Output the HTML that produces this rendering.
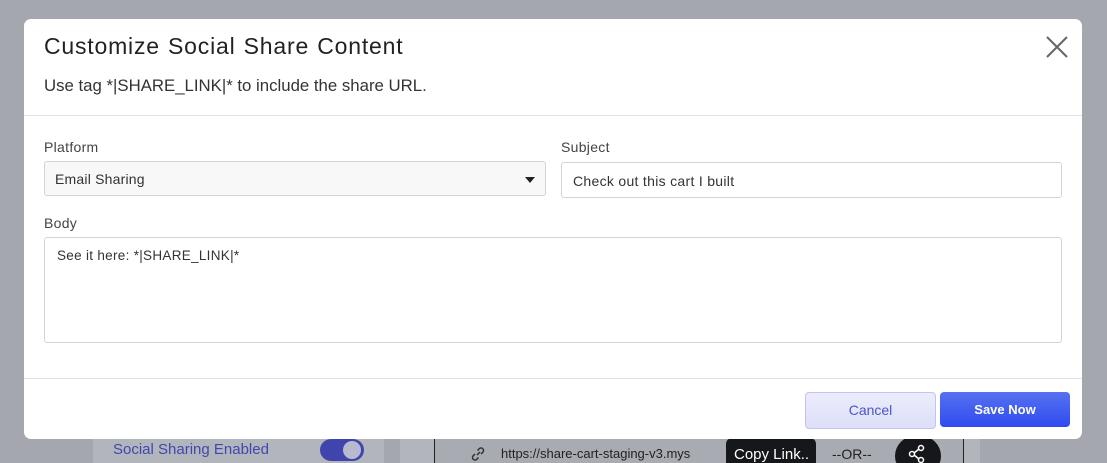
<!DOCTYPE html>
<html><head><style>
html,body{margin:0;width:1107px;height:463px;overflow:hidden}
body{background:#a4a7ae;position:relative;font-family:"Liberation Sans",sans-serif}
.p{position:absolute}
.modal{left:24px;top:19px;width:1058px;height:420px;background:#fff;border-radius:7px}
.inp{position:absolute;border:1px solid #d4d4d8;border-radius:3px;background:#fff;font-size:14px;color:#333;box-sizing:border-box}
.lbl{position:absolute;font-size:14px;color:#444}
</style></head><body>
<div class="p" style="left:93px;top:430px;width:291px;height:40px;background:#b3b5bc"></div>
<div class="p" style="left:400px;top:430px;width:580px;height:40px;background:#b3b5bc"></div>
<div class="p" style="left:434px;top:430px;width:528px;height:40px;background:#a9abb2;border-left:1px solid #222;border-right:1px solid #222"></div>
<div class="p" style="left:113px;top:441px;font-size:15px;color:#4048b0">Social Sharing Enabled</div>
<div class="p" style="left:320px;top:439px;width:44px;height:22px;border-radius:11px;background:#3f45ad"></div>
<div class="p" style="left:343px;top:441px;width:18px;height:18px;border-radius:9px;background:#b8bad0"></div>
<svg class="p" style="left:470px;top:446px" width="16" height="16"><path d="M7 9l3-3M5 8l-2 2a2.5 2.5 0 0 0 3.5 3.5l2-2M11 8l2-2a2.5 2.5 0 0 0-3.5-3.5l-2 2" stroke="#333" stroke-width="1.5" fill="none"/></svg>
<div class="p" style="left:501px;top:446px;font-size:13px;color:#222">https://share-cart-staging-v3.mys</div>
<div class="p" style="left:726px;top:438px;width:90px;height:30px;background:#16171a;border-radius:6px;color:#fff;font-size:15px;padding:8px 0 0 8px;box-sizing:border-box">Copy Link..</div>
<div class="p" style="left:832px;top:446px;font-size:14px;color:#222">--OR--</div>
<div class="p" style="left:895px;top:436px;width:46px;height:40px;border-radius:23px;background:#16171a"></div>
<svg class="p" style="left:907px;top:444px" width="20" height="20"><circle cx="14" cy="4" r="2.5" stroke="#fff" fill="none" stroke-width="1.5"/><circle cx="5" cy="10" r="2.5" stroke="#fff" fill="none" stroke-width="1.5"/><circle cx="14" cy="16" r="2.5" stroke="#fff" fill="none" stroke-width="1.5"/><path d="M7 9l5-4M7 11l5 4" stroke="#fff" stroke-width="1.5"/></svg>

<div class="p modal">
  <div class="p" style="left:20px;top:14px;font-size:23px;color:#222;letter-spacing:0.8px;word-spacing:1px">Customize Social Share Content</div>
  <div class="p" style="left:20px;top:57px;font-size:16.8px;color:#333">Use tag *|SHARE_LINK|* to include the share URL.</div>
  <svg class="p" style="left:1022px;top:17px" width="22" height="22"><path d="M1 1L21 21M21 1L1 21" stroke="#666" stroke-width="2"/></svg>
  <div class="p" style="left:0;top:96px;width:1058px;height:1px;background:#e2e2e6"></div>
  <div class="lbl" style="left:20px;top:120px;letter-spacing:0.3px">Platform</div>
  <div class="inp" style="left:20px;top:142px;width:502px;height:35px;background:#f8f8f8;padding:9px 10px;letter-spacing:0.2px">Email Sharing</div>
  <div class="p" style="left:501px;top:158px;width:0;height:0;border-left:5px solid transparent;border-right:5px solid transparent;border-top:6px solid #222"></div>
  <div class="lbl" style="left:537px;top:120px;letter-spacing:0.3px">Subject</div>
  <div class="inp" style="left:537px;top:143px;width:501px;height:36px;padding:10px 11px;letter-spacing:0.3px">Check out this cart I built</div>
  <div class="lbl" style="left:20px;top:196px;letter-spacing:0.3px">Body</div>
  <div class="inp" style="left:20px;top:218px;width:1018px;height:106px;padding:10px 12px;font-size:13.5px;letter-spacing:0.3px">See it here: *|SHARE_LINK|*</div>
  <div class="p" style="left:0;top:359px;width:1058px;height:1px;background:#e2e2e6"></div>
  <div class="p" style="left:781px;top:373px;width:129px;height:35px;border:1px solid #c6c2ee;border-radius:4px;background:linear-gradient(#ececfc,#dcdff8);color:#4a55c8;font-size:14px;text-align:center;line-height:35px">Cancel</div>
  <div class="p" style="left:916px;top:373px;width:130px;height:35px;border-radius:4px;background:linear-gradient(#5672f0,#2f4bf0);color:#fff;font-size:13px;font-weight:bold;text-align:center;line-height:35px">Save Now</div>
</div>
</body></html>
